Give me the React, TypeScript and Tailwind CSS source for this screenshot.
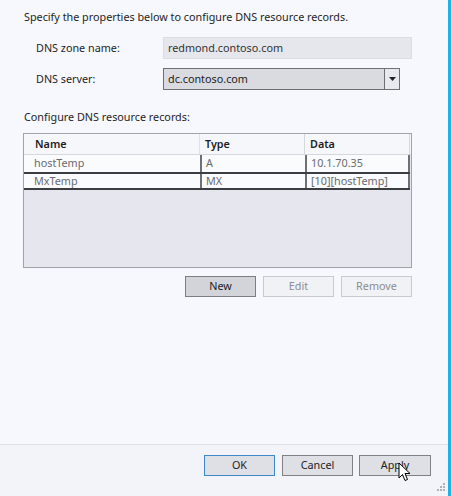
import React from "react";

const font = { fontFamily: '"Noto Sans", "Open Sans", sans-serif' };

function Btn({ children, variant, w = "w-[71px]" }: { children: React.ReactNode; variant: "primary" | "disabled" | "normal" | "focus"; w?: string }) {
  const cls =
    variant === "primary"
      ? "bg-[#d3d4da] border-[#7c7d82] text-[#222]"
      : variant === "disabled"
      ? "bg-[#f1f2f6] border-[#c9cacf] text-[#8b8c90]"
      : variant === "focus"
      ? "bg-[#dfe0e6] border-[#3d8ac4] text-[#222]"
      : "bg-[#dfe0e6] border-[#808186] text-[#222]";
  return (
    <div className={`${w} h-[21px] border ${cls} flex items-center justify-center text-[10.8px] leading-none`}>
      {children}
    </div>
  );
}

export default function App() {
  return (
    <div className="w-[451px] h-[496px] relative bg-[#f7f8fd] overflow-hidden flex" style={font}>
      <div className="flex-1 flex flex-col text-[#1e1e1e]">
        <div className="pl-[24px] pt-[9px] h-[25px] text-[10.8px] leading-[16px]">
          Specify the properties below to configure DNS resource records.
        </div>
        <div className="flex items-center mt-[12px] h-[22px]">
          <div className="pl-[36px] w-[163px] text-[10.8px]">DNS zone name:</div>
          <div className="w-[249px] h-[22px] bg-[#e6e7ed] border border-[#dcdde3] flex items-center pl-[4px] text-[10.8px] text-[#333]">
            redmond.contoso.com
          </div>
        </div>
        <div className="flex items-center mt-[9px] h-[22px]">
          <div className="pl-[36px] w-[163px] text-[10.8px]">DNS server:</div>
          <div className="w-[237px] h-[22px] bg-[#dadbe1] border border-[#6e6f74] flex items-center text-[10.8px] text-[#222]">
            <div className="flex-1 pl-[4px]">dc.contoso.com</div>
            <div className="w-[15px] h-full border-l border-[#6e6f74] bg-[#e8e9ee] flex items-center justify-center">
              <svg width="7" height="4" viewBox="0 0 7 4"><path d="M0 0h7L3.5 4z" fill="#222" /></svg>
            </div>
          </div>
        </div>
        <div className="pl-[24px] mt-[19px] h-[16px] leading-[16px] text-[10.8px]">Configure DNS resource records:</div>
        <div className="ml-[23px] mt-[8px] w-[389px] h-[135px] border border-[#a2a3a8] bg-[#e5e6ee] flex flex-col">
          <div className="flex h-[21px] bg-[#f6f7fb] border-b border-[#d6d7dc] text-[10.8px] text-[#1e1e1e] font-semibold">
            <div className="w-[176px] pl-[11px] flex items-center border-r border-[#e0e1e6]">Name</div>
            <div className="w-[105px] pl-[5px] flex items-center border-r border-[#d6d7dc]">Type</div>
            <div className="w-[105px] pl-[5px] flex items-center border-r border-[#d6d7dc]">Data</div>
          </div>
          <div className="flex h-[17px] bg-[#fafbfd] text-[10.8px] text-[#6a6a6e] w-[386px]">
            <div className="w-[176px] pl-[10px] flex items-center">hostTemp</div>
            <div className="w-[105px] pl-[4px] flex items-center border-l-2 border-[#6f7075]">A</div>
            <div className="w-[105px] pl-[4px] flex items-center border-l-2 border-r-2 border-[#6f7075]">10.1.70.35</div>
          </div>
          <div className="flex h-[18px] bg-[#fafbfd] text-[10.8px] text-[#6a6a6e] w-[386px] border-y-2 border-[#3c3d40]">
            <div className="w-[176px] pl-[10px] flex items-center">MxTemp</div>
            <div className="w-[105px] pl-[4px] flex items-center border-l-2 border-[#6f7075]">MX</div>
            <div className="w-[105px] pl-[4px] flex items-center border-l-2 border-r-2 border-[#6f7075]">[10][hostTemp]</div>
          </div>
        </div>
        <div className="flex mt-[8px] pl-[185px] gap-[7px]">
          <Btn variant="primary">New</Btn>
          <Btn variant="disabled" w="w-[71px]">Edit</Btn>
          <Btn variant="disabled">Remove</Btn>
        </div>
        <div className="flex-1" />
        <div className="h-[52px] border-t border-[#dfe0e5] bg-[#f3f4f9] flex pt-[10px] pl-[204px]">
          <Btn variant="focus">OK</Btn>
          <div className="w-[7px]" />
          <Btn variant="normal">Cancel</Btn>
          <div className="w-[6px]" />
          <Btn variant="normal" w="w-[72px]">Apply</Btn>
        </div>
      </div>
      <div className="w-[3px] h-full bg-[#1bb3e2]" />
      <svg className="absolute left-[398px] top-[462px]" width="14" height="22" viewBox="0 0 14 22">
        <path d="M1 1 L1 16 L4.5 12.5 L7 18.5 L9.5 17.5 L7 11.5 L12 11.5 Z" fill="#fff" stroke="#000" strokeWidth="1" />
      </svg>
      <svg className="absolute left-[436px] top-[482px]" width="10" height="10" viewBox="0 0 10 10">
        <rect x="7" y="1" width="2" height="2" fill="#b0b1b6" />
        <rect x="4" y="4" width="2" height="2" fill="#b0b1b6" />
        <rect x="7" y="4" width="2" height="2" fill="#b0b1b6" />
        <rect x="1" y="7" width="2" height="2" fill="#b0b1b6" />
        <rect x="4" y="7" width="2" height="2" fill="#b0b1b6" />
        <rect x="7" y="7" width="2" height="2" fill="#b0b1b6" />
      </svg>
    </div>
  );
}
